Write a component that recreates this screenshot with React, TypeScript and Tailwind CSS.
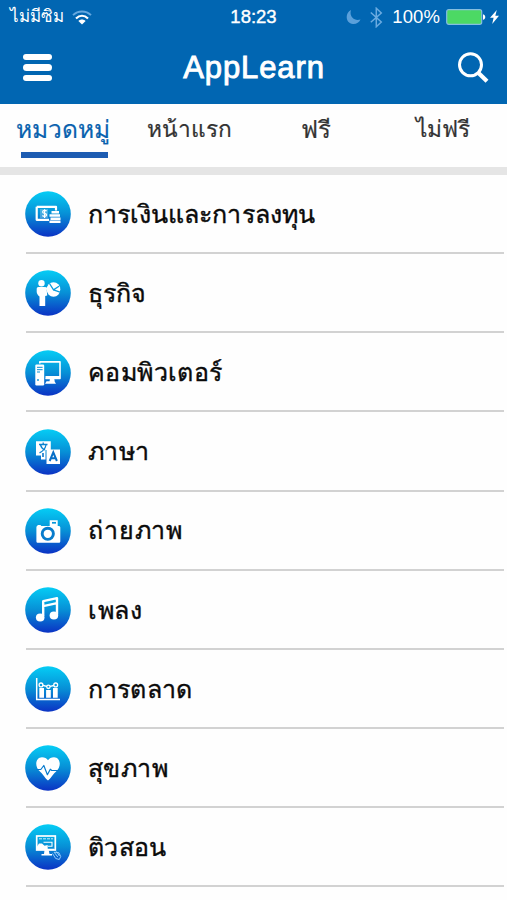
import type { ReactNode } from 'react';

interface Category {
  label: string;
  spacing: string;
  icon: ReactNode;
}

// icons are drawn on a 46x46 disc
const categories: Category[] = [
  {
    label: 'การเงินและการลงทุน',
    spacing: 'tracking-[0.05px]',
    icon: (
      <>
        <path d="M11.7 15.8H31V19.5M24 28.8H11.7V15.8" fill="none" stroke="#fff" strokeWidth="2.2" strokeLinejoin="round" />
        <path d="M15 18h8v9h-8z" fill="#fff" opacity=".25" />
        <path d="M21.6 20.2c-1-1.2-4-1-4 .7 0 2 4 1 4 3 0 1.600-3 2-4.200.6M19.600 18.200v8.800" fill="none" stroke="#fff" strokeWidth="1.2" />
        <path d="M26.500 20h7.500v2.500h-7.500zM24.500 23.300h10.500v2.400h-10.500zM25.500 26.500h10v2.400h-10zM24.500 29.600h11v2.400h-11z" fill="#fff" />
      </>
    ),
  },
  {
    label: 'ธุรกิจ',
    spacing: 'tracking-normal',
    icon: (
      <>
        <circle cx="16.500" cy="13.200" r="3.200" fill="#fff" />
        <path d="M13.600 17h5.600c1.400 0 2.400 1 2.500 2.400l.5 6.100-2 .4V36h-5.700V26.500c-1.300-.8-2.800-2.700-2.800-4.500v-3c0-1.200.6-2 1.900-2z" fill="#fff" />
        <path d="M19.500 18l5.500 1.500" stroke="#fff" strokeWidth="2" />
        <ellipse cx="28.500" cy="19.500" rx="6.800" ry="7.300" fill="#fff" />
        <path d="M24.500 13.500l4 6.300 5.500-3.600M28.500 19.800l6.500 2.400" fill="none" stroke="#079bdc" strokeWidth="1.300" />
      </>
    ),
  },
  {
    label: 'คอมพิวเตอร์',
    spacing: 'tracking-[0.4px]',
    icon: (
      <>
        <path d="M14.800 13.500v-1.600h20.200v16.600H20.500" fill="none" stroke="#fff" strokeWidth="1.600" strokeLinejoin="round" />
        <path d="M20.500 26h14.500v2.800H20.500zM25 28.500h4.200l.5 2.800h-5.200zM21.500 31.200h8l1.500 2.500H20z" fill="#fff" />
        <rect x="10.300" y="14.500" width="8.900" height="21" rx="1.200" fill="#fff" />
        <path d="M12 17.300h5.600M12 19.700h5.600M12 22h3" stroke="#078fd5" strokeWidth="1" />
        <circle cx="13" cy="30" r=".9" fill="#078fd5" />
      </>
    ),
  },
  {
    label: 'ภาษา',
    spacing: 'tracking-[0.25px]',
    icon: (
      <>
        <path d="M11 12.300h14.800v8.700h-5.300v9.500h-4.500v-4h-5z" fill="#fff" />
        <path d="M14 15.500h8.500M18.200 13.500v2M21 16c-.7 3.700-3.200 6.200-6.500 7.800M15.500 16c.9 2.800 2.600 4.300 4.600 5" fill="none" stroke="#0a83d0" strokeWidth="1.300" />
        <path d="M18 24v4" stroke="#0a75ca" strokeWidth="1.600" />
        <path d="M21.500 20.500h13.500v14.500H21.500z" fill="#fff" />
        <path d="M24.700 32l3.600-8.700 3.600 8.700M26 29.300h4.600" fill="none" stroke="#096fc7" strokeWidth="2" />
      </>
    ),
  },
  {
    label: 'ถ่ายภาพ',
    spacing: 'tracking-[0.85px]',
    icon: (
      <>
        <path d="M13 17h2.500l.8 1h8.400v-5.700h8V18h1c.9 0 1.600.7 1.600 1.600v13.600c0 .9-.7 1.600-1.600 1.600H13c-.9 0-1.600-.7-1.600-1.600V19.600c0-.9.4-1.600 1.600-2.600z" fill="#fff" />
        <path d="M27 14.800h4" stroke="#0896da" strokeWidth="1.700" />
        <circle cx="22.800" cy="25.800" r="5.600" fill="#fff" stroke="#087ccc" strokeWidth="2.900" />
      </>
    ),
  },
  {
    label: 'เพลง',
    spacing: 'tracking-[0.600px]',
    icon: (
      <>
        <path d="M18.200 29V14.200L32 11.200V27.500M18.200 19.200L32 16.200" fill="none" stroke="#fff" strokeWidth="2.400" strokeLinejoin="round" />
        <ellipse cx="15.200" cy="30.500" rx="4.300" ry="3.900" fill="#fff" />
        <ellipse cx="28.900" cy="28.500" rx="4.300" ry="3.900" fill="#fff" />
      </>
    ),
  },
  {
    label: 'การตลาด',
    spacing: 'tracking-[0.15px]',
    icon: (
      <>
        <path d="M11.700 12v21.400H35" fill="none" stroke="#fff" strokeWidth="1.500" />
        <path d="M14.300 22h4.700v9.700h-4.700zM21.100 24h4.700v7.700h-4.700zM28 22h4.700v9.700H28z" fill="#fff" />
        <path d="M16.500 19l7 1.800 7-1.800" fill="none" stroke="#fff" strokeWidth="1.300" />
        <g fill="#079cdd" stroke="#fff" strokeWidth="1.300">
          <circle cx="16" cy="18.900" r="1.900" />
          <circle cx="23.400" cy="20.800" r="1.700" />
          <circle cx="30.700" cy="18.900" r="1.900" />
        </g>
      </>
    ),
  },
  {
    label: 'สุขภาพ',
    spacing: 'tracking-[0.45px]',
    icon: (
      <>
        <path d="M23 35.500c-2.200-1.200-4.600-5.800-7.600-8.400C8.500 21 11 12.300 17 12.300c2.800 0 4.700 1 6 3 1.300-2 3.200-3 6-3 6 0 8.500 8.700 1.600 14.800-3 2.600-5.400 7.200-7.600 8.400z" fill="#fff" />
        <path d="M11.500 24.500h4.300l3-4 3.600 9.200 2.900-5.500 1.500 1.300h7" fill="none" stroke="#087bce" strokeWidth="1.200" strokeLinejoin="round" />
      </>
    ),
  },
  {
    label: 'ติวสอน',
    spacing: 'tracking-[0.25px]',
    icon: (
      <>
        <rect x="11.700" y="12" width="18.600" height="14" fill="none" stroke="#fff" strokeWidth="1.700" />
        <path d="M14 14.800h14" stroke="#fff" strokeWidth=".8" strokeDasharray="3 1" />
        <path d="M12 22.500l2-3h3l2.500 2.300 3.200-.8v5H12zM19.500 26h4.200l.8 4h2.500v1.500H16.500V30H19z" fill="#fff" />
        <path d="M18.500 18.300h8.500v4h-4M22 25.400h7" fill="none" stroke="#fff" strokeWidth="1.100" />
        <path d="M27.500 29.500l3.200 5 3.600 1 1.400-3-1.700-3.700-4.500-.6M29 28l3.800 5M31.500 27.500l3 4.500" fill="none" stroke="#9fd4ff" strokeWidth=".9" strokeLinejoin="round" />
      </>
    ),
  },
];

function StatusBar() {
  return (
    <div className="grid h-[34px] grid-cols-[1fr_auto_1fr] items-center text-[18.500px] leading-none text-white">
      <div className="flex items-center gap-[8px] pl-[10px]">
        <span className="text-[17px] leading-[34px]">ไม่มีซิม</span>
        <svg width="20" height="15" viewBox="0 0 20 15" fill="none">
          <path d="M1 5.200c5-5 13-5 18 0" stroke="#65a8df" strokeWidth="1.900" />
          <path d="M4 8.500c3.600-3.400 8.400-3.400 12 0" stroke="#fff" strokeWidth="2.200" />
          <path d="M6.400 11c2-2 5.200-2 7.200 0L10 14.500z" fill="#fff" />
        </svg>
      </div>
      <span className="[-webkit-text-stroke:0.4px_white]">18:23</span>
      <div className="flex items-center justify-end pr-[8px]">
        <svg width="15" height="16" viewBox="0 0 15 16" className="mr-[9px]">
          <path d="M5 1C-1.500 4-.5 14.500 7 15c3.500.2 6-1.500 7.500-4.500C8 12.500 3 7.500 5 1z" fill="#5ba0db" />
        </svg>
        <svg width="13" height="21" viewBox="0 0 13 21" fill="none" className="mr-[9px]">
          <path d="M.8 5.500l10.500 9.500-5 4.700V1.300l5 4.700L.8 15.300" stroke="#6babe0" strokeWidth="1.500" />
        </svg>
        <span className="mr-[6px] tracking-[0.1px]">100%</span>
        <svg width="40" height="16" viewBox="0 0 40 16" className="mr-[4px]">
          <rect x=".7" y=".7" width="35" height="14.600" rx="2" fill="#4cd964" stroke="#85bedf" strokeWidth="1.200" />
          <path d="M37 5.200c3 .6 3 5 0 5.600z" fill="#fff" />
        </svg>
        <svg width="9" height="14" viewBox="0 0 9 14">
          <path d="M6.800 0L0 7.800h3.600L2.200 14 9 5.800H5.300z" fill="#fff" />
        </svg>
      </div>
    </div>
  );
}

function Header() {
  return (
    <div className="grid h-[67px] grid-cols-[1fr_auto_1fr] items-center pl-[23px] pr-[18px]">
      <div className="flex flex-col gap-[4px]">
        <span className="h-[6.500px] w-[29px] rounded-full bg-white" />
        <span className="h-[6.500px] w-[29px] rounded-full bg-white" />
        <span className="h-[6.500px] w-[29px] rounded-full bg-white" />
      </div>
      <h1 className="mr-[4px] text-[31px] leading-none tracking-[0.900px] text-white [-webkit-text-stroke:0.9px_white]">
        AppLearn
      </h1>
      <svg width="32" height="32" viewBox="0 0 32 32" fill="none" stroke="#fff" className="mt-px justify-self-end">
        <circle cx="13.500" cy="12.800" r="11" strokeWidth="3" />
        <path d="M21 20.500l9 8.800" strokeWidth="4.200" />
      </svg>
    </div>
  );
}

function Tabs() {
  return (
    <div className="flex h-[63.500px] items-start text-[22.700px] leading-[51px] text-[#333] [-webkit-text-stroke:0.2px_#333]">
      <div className="flex w-[126px] flex-col items-center text-[24.500px] text-[#0a62ae] [-webkit-text-stroke:0.2px_#0a62ae]">
        <span>หมวดหมู่</span>
        <span className="-mt-[3px] ml-[2px] h-[6px] w-[87px] bg-[#1d5cb2]" />
      </div>
      <div className="w-[126px] text-center">หน้าแรก</div>
      <div className="w-[127px] text-center text-[24px]">ฟรี</div>
      <div className="w-[127px] text-center">ไม่ฟรี</div>
    </div>
  );
}

export default function App() {
  return (
    <div className="h-[900px] w-[507px] overflow-hidden bg-[#fefefe] font-['Liberation_Sans',serif]">
      <div className="h-[103.500px] bg-[#0166b2]">
        <StatusBar />
        <Header />
      </div>
      <Tabs />
      <div className="h-[8px] bg-[#e5e5e5]" />

      <ul>
        {categories.map((category, index) => (
          <li key={category.label} className="ml-[26px] mr-[3px] flex h-[79.150px] items-center border-b-2 border-[#d2d2d2] pt-[1.500px]">
            <svg width="46" height="46" viewBox="0 0 46 46" className="-ml-[1px] shrink-0">
              <defs>
                <linearGradient id={`disc-${index}`} x1="0" y1="0" x2="0" y2="1">
                  <stop offset="0" stopColor="#05cdf5" />
                  <stop offset="0.500" stopColor="#078fd6" />
                  <stop offset="1" stopColor="#0b32c4" />
                </linearGradient>
              </defs>
              <circle cx="23" cy="23" r="22.800" fill={`url(#disc-${index})`} />
              {category.icon}
            </svg>
            <span className={`ml-[17px] text-[25px] leading-none text-[#0a0a0a] [-webkit-text-stroke:0.4px_#0a0a0a] ${category.spacing}`}>
              {category.label}
            </span>
          </li>
        ))}
      </ul>
    </div>
  );
}
